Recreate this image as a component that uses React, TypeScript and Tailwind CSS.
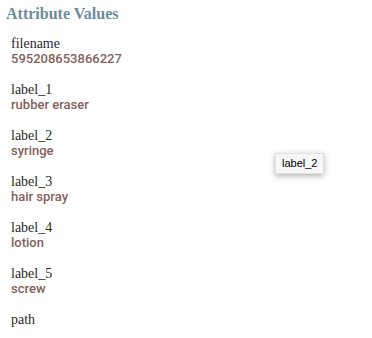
import React from 'react';

const rows: { label: string; value?: string }[] = [
  { label: 'filename', value: '595208653866227' },
  { label: 'label_1', value: 'rubber eraser' },
  { label: 'label_2', value: 'syringe' },
  { label: 'label_3', value: 'hair spray' },
  { label: 'label_4', value: 'lotion' },
  { label: 'label_5', value: 'screw' },
  { label: 'path' },
];

export default function App() {
  return (
    <div className="relative w-[372px] h-[338px] overflow-hidden bg-white">
      <h2 className="pl-[6px] pt-[3px] text-[16px] leading-[22px] font-bold text-[#6d8c9c] font-['Liberation_Serif',serif]">
        Attribute Values
      </h2>
      <div className="pl-[11px] pt-[11px] flex flex-col gap-[15px]">
        {rows.map((r) => (
          <div key={r.label} className="flex flex-col">
            <span className="text-[14px] leading-[15px] text-[#2a2a2a] font-['Liberation_Serif',serif]">{r.label}</span>
            {r.value && (
              <span className="text-[13px] leading-[16px] font-medium text-[#835f5c] font-['Roboto',sans-serif]">
                {r.value}
              </span>
            )}
          </div>
        ))}
      </div>
      {/* hover tooltip */}
      <div className="absolute left-[275px] top-[153px] px-[6px] py-[2px] bg-[#f7f7f7] border border-[#e2e2e2] shadow-[0_2px_6px_rgba(0,0,0,0.3)] text-[11px] leading-[15px] text-black font-['Liberation_Sans',sans-serif]">
        label_2
      </div>
    </div>
  );
}
